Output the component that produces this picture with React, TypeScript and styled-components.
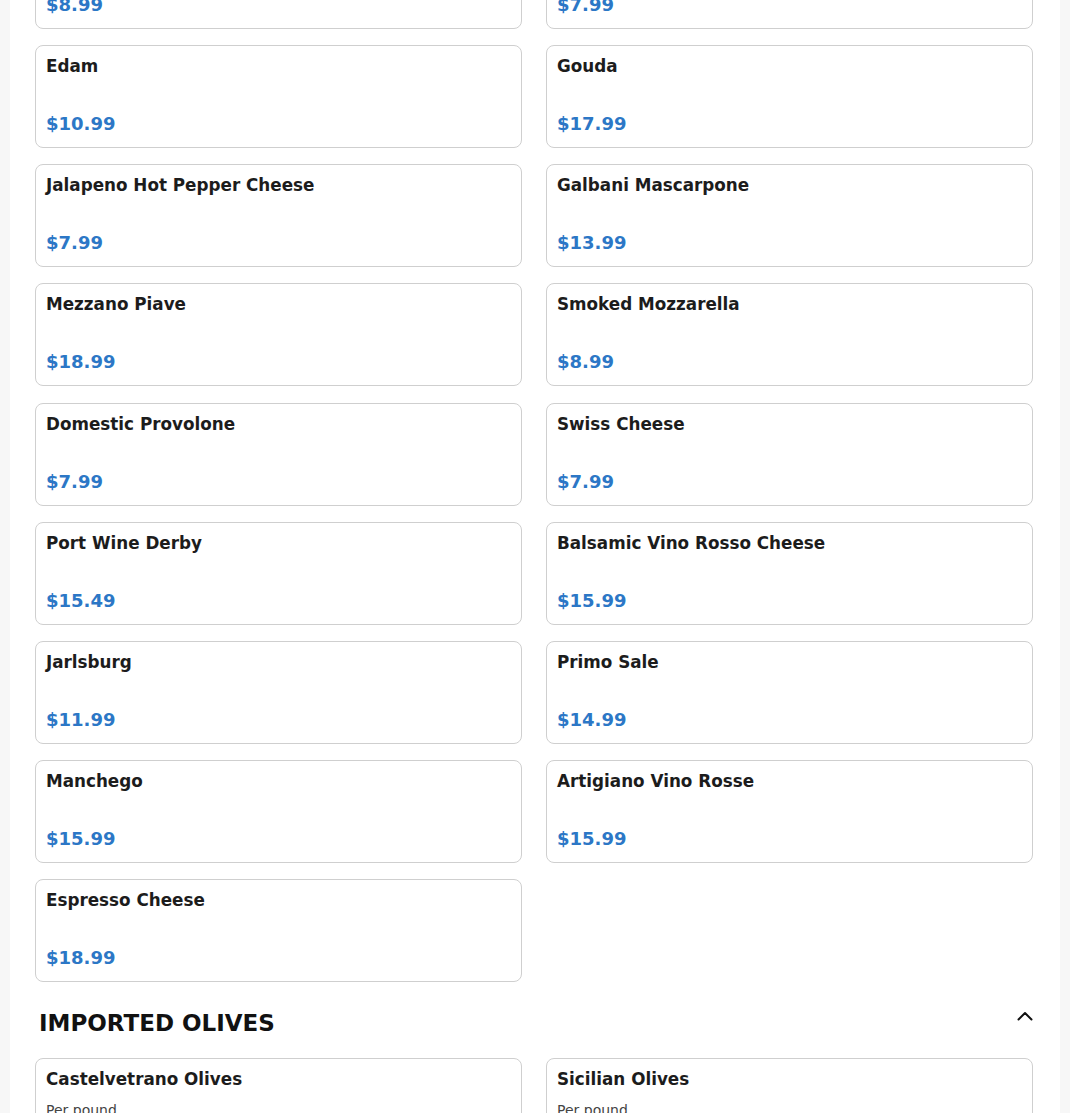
import React from "react";
import styled, { createGlobalStyle } from "styled-components";

interface Item {
    name: string;
    price?: string;
    note?: string;
}

const cheeses: Item[] = [
    { name: "Aged Asiago", price: "$8.99" },
    { name: "Fontina", price: "$7.99" },
    { name: "Edam", price: "$10.99" },
    { name: "Gouda", price: "$17.99" },
    { name: "Jalapeno Hot Pepper Cheese", price: "$7.99" },
    { name: "Galbani Mascarpone", price: "$13.99" },
    { name: "Mezzano Piave", price: "$18.99" },
    { name: "Smoked Mozzarella", price: "$8.99" },
    { name: "Domestic Provolone", price: "$7.99" },
    { name: "Swiss Cheese", price: "$7.99" },
    { name: "Port Wine Derby", price: "$15.49" },
    { name: "Balsamic Vino Rosso Cheese", price: "$15.99" },
    { name: "Jarlsburg", price: "$11.99" },
    { name: "Primo Sale", price: "$14.99" },
    { name: "Manchego", price: "$15.99" },
    { name: "Artigiano Vino Rosse", price: "$15.99" },
    { name: "Espresso Cheese", price: "$18.99" },
];

const olives: Item[] = [
    { name: "Castelvetrano Olives", note: "Per pound", price: "$9.99" },
    { name: "Sicilian Olives", note: "Per pound", price: "$8.99" },
];

const App: React.FC = () => {
    return (
        <>
            <GlobalStyle />
            <Page>
                <Menu>
                    <Grid>
                        {cheeses.map((item, index) => (
                            <Card key={index}>
                                <Name>{item.name}</Name>
                                {item.note && <Note>{item.note}</Note>}
                                <Price>{item.price}</Price>
                            </Card>
                        ))}
                    </Grid>
                    <SectionHead>
                        <SectionTitle>IMPORTED OLIVES</SectionTitle>
                        <Toggle aria-label="Collapse section">
                            <svg width="16" height="10" viewBox="0 0 16 10" fill="none">
                                <polyline
                                    points="1.5,8.5 8,2 14.5,8.5"
                                    stroke="#111"
                                    strokeWidth="2"
                                    strokeLinecap="round"
                                    strokeLinejoin="round"
                                />
                            </svg>
                        </Toggle>
                    </SectionHead>
                    <Grid>
                        {olives.map((item, index) => (
                            <Card key={index}>
                                <Name>{item.name}</Name>
                                {item.note && <Note>{item.note}</Note>}
                                <Price>{item.price}</Price>
                            </Card>
                        ))}
                    </Grid>
                </Menu>
            </Page>
        </>
    );
};

export default App;

const GlobalStyle = createGlobalStyle`
html, body {
    margin: 0;
    padding: 0;
    background: #f7f7f7;
    font-family: "DejaVu Sans", "Noto Sans", sans-serif;
    overflow: hidden;
}
`;

// the page is shown scrolled: the first row of cards sits partly above the top edge
const Page = styled.div`
height: 1113px;
overflow: hidden;
padding: 0 10px;
`;

const Menu = styled.main`
background: #ffffff;
margin-top: -74px;
padding: 0 27px 40px 25px;
min-height: 1300px;
`;

const Grid = styled.div`
display: grid;
grid-template-columns: 1fr 1fr;
column-gap: 24px;
row-gap: 16.15px;
`;

const Card = styled.div`
display: flex;
flex-direction: column;
min-height: 78px;
padding: 10px 10px 13px 10px;
border: 1px solid #cfcfcf;
border-radius: 8px;
background: #fff;
`;

const Name = styled.div`
font-size: 16.8px;
line-height: 20px;
font-weight: 700;
color: #1c1c1c;
`;

const Note = styled.div`
margin-top: 11px;
font-size: 14px;
line-height: 20px;
color: #444;
`;

const Price = styled.div`
margin-top: auto;
font-size: 18px;
line-height: 21px;
font-weight: 700;
color: #2c77c6;
`;

const SectionHead = styled.div`
display: flex;
justify-content: space-between;
align-items: flex-start;
margin: 28px 0 22px;
padding-left: 4px;
`;

const SectionTitle = styled.h2`
margin: 0;
font-size: 23px;
line-height: 26px;
font-weight: 700;
color: #111;
`;

const Toggle = styled.button`
display: flex;
align-items: center;
justify-content: center;
margin-top: 1px;
padding: 0;
border: none;
background: none;
cursor: pointer;
`;
